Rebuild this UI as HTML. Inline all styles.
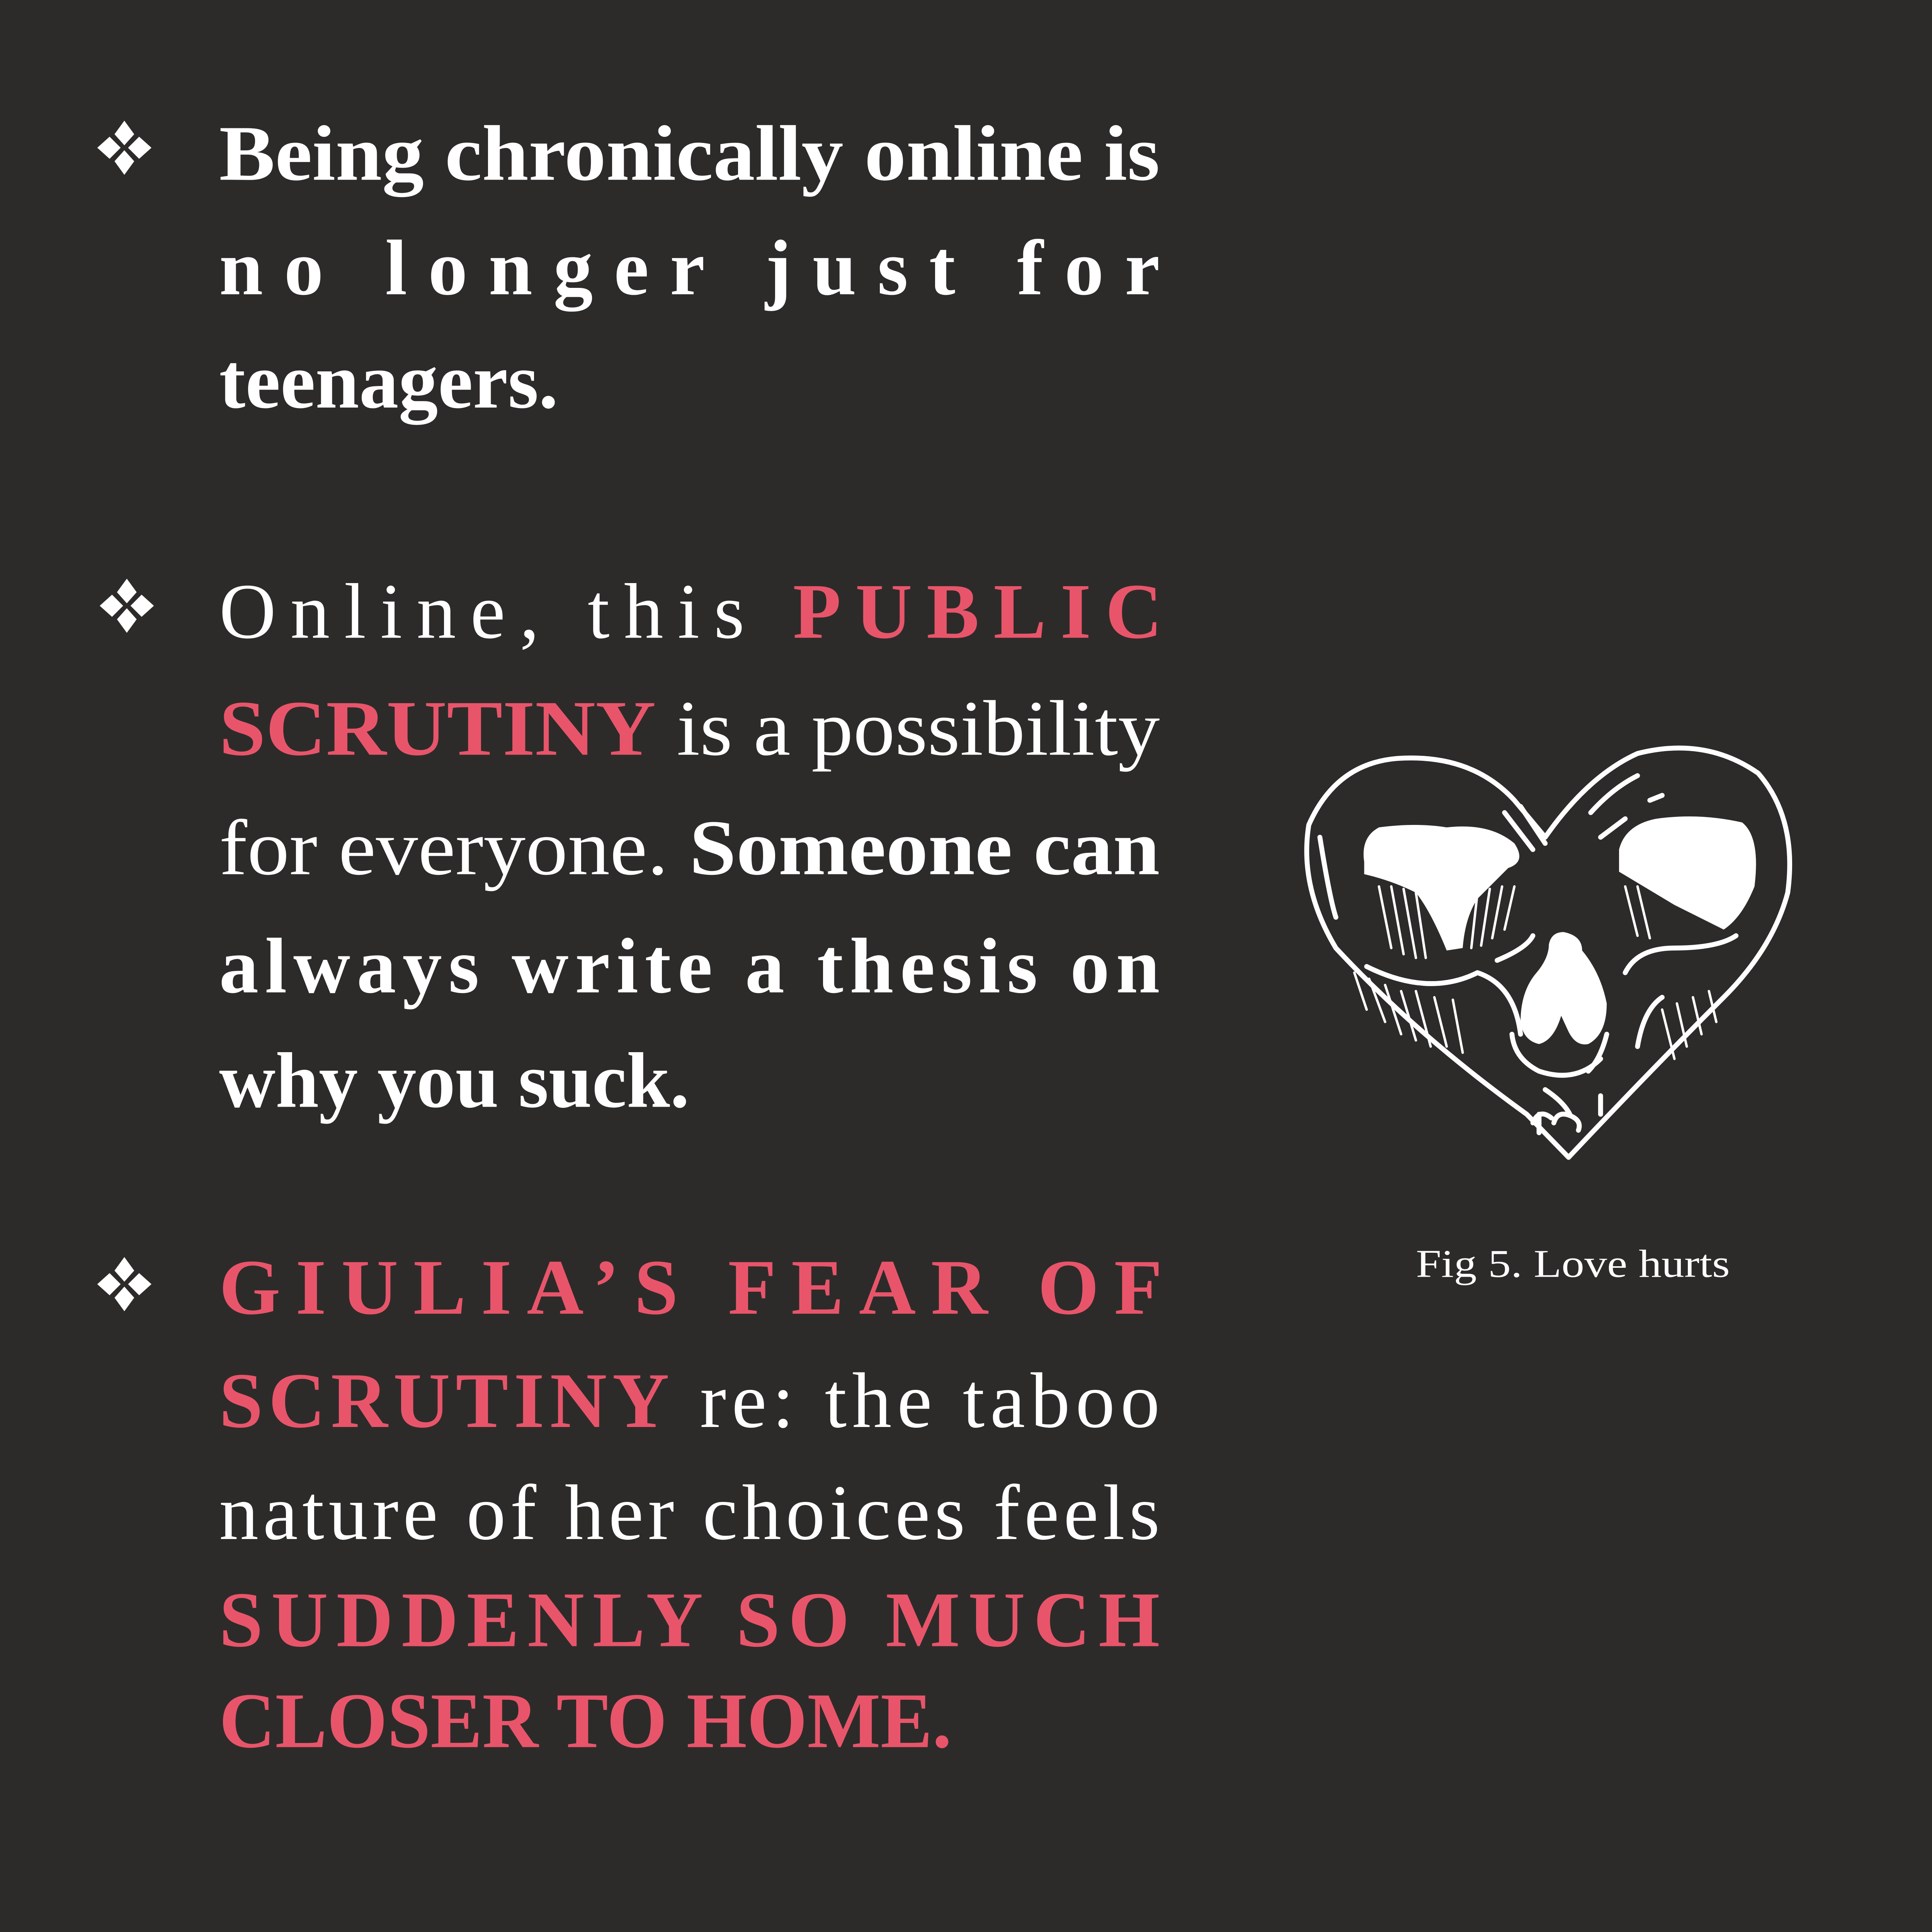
<!DOCTYPE html>
<html><head><meta charset="utf-8"><style>
html,body{margin:0;padding:0;background:#2d2b2a;width:5334px;height:5334px;overflow:hidden;}
svg{display:block;position:absolute;left:0;top:0;}
</style></head><body>
<svg width="5334" height="5334" viewBox="0 0 1674 1674" xmlns="http://www.w3.org/2000/svg" overflow="hidden">
<rect width="1674" height="1674" fill="#2d2b2a"/>
<defs>
<g id="bul" fill="#fff">
<polygon points="0,-22 8,-11 0,-2 -8,-11"/>
<polygon points="0,22 8,11 0,2 -8,11"/>
<polygon points="-22,0 -12,-9 -3,0 -12,9"/>
<polygon points="22,0 12,-9 3,0 12,9"/>
</g>
</defs>
<use href="#bul" x="101" y="120"/>
<use href="#bul" x="103" y="492"/>
<use href="#bul" x="101" y="1043"/>
<g font-family="Liberation Serif, serif" fill="#fff" font-size="64">
<text x="178" y="146" font-weight="bold" textLength="764" lengthAdjust="spacingAndGlyphs">Being chronically online is</text>
<text x="178" y="239" font-weight="bold" textLength="764" lengthAdjust="spacing">no longer just for</text>
<text x="178" y="331" font-weight="bold">teenagers.</text>

<text x="178" y="518" textLength="766" lengthAdjust="spacing">Online, this <tspan font-weight="bold" fill="#e8556a">PUBLIC</tspan></text>
<text x="178" y="613" textLength="764" lengthAdjust="spacingAndGlyphs"><tspan font-weight="bold" fill="#e8556a">SCRUTINY</tspan> is a possibility</text>
<text x="178" y="710" textLength="764" lengthAdjust="spacingAndGlyphs">for everyone. <tspan font-weight="bold">Someone can</tspan></text>
<text x="178" y="806" font-weight="bold" textLength="764" lengthAdjust="spacing">always write a thesis on</text>
<text x="178" y="899" font-weight="bold" textLength="382" lengthAdjust="spacingAndGlyphs">why you suck.</text>

<text x="178" y="1067" font-weight="bold" fill="#e8556a" textLength="766" lengthAdjust="spacing">GIULIA’S FEAR OF</text>
<text x="178" y="1159" textLength="764" lengthAdjust="spacing"><tspan font-weight="bold" fill="#e8556a">SCRUTINY</tspan> re: the taboo</text>
<text x="178" y="1250" textLength="764" lengthAdjust="spacing">nature of her choices feels</text>
<text x="178" y="1337" font-weight="bold" fill="#e8556a" textLength="764" lengthAdjust="spacing">SUDDENLY SO MUCH</text>
<text x="178" y="1419" font-weight="bold" fill="#e8556a" textLength="595" lengthAdjust="spacingAndGlyphs">CLOSER TO HOME.</text>

<text x="1150" y="1037" font-size="32" textLength="255" lengthAdjust="spacingAndGlyphs">Fig 5. Love hurts</text>
</g>
<g fill="none" stroke="#fff" stroke-width="4" stroke-linecap="round" stroke-linejoin="round">
<path d="M1274,940 L1240,905 Q1150,840 1085,770 Q1055,720 1063,670 Q1085,620 1135,616 Q1195,612 1230,650 L1255,680 Q1290,630 1330,612 Q1385,598 1428,628 Q1460,665 1452,725 Q1440,770 1400,810 Q1340,870 1274,940 Z"/>
<path d="M1072,680 Q1080,730 1085,745"/>
<path d="M1110,785 Q1160,810 1200,790 Q1230,800 1235,840 M1216,780 Q1240,770 1245,760"/>
<path d="M1320,790 Q1330,770 1360,770 Q1395,770 1410,760 M1330,850 Q1335,820 1350,810"/>
<path d="M1228,840 Q1230,860 1250,870 Q1280,880 1300,860 M1290,870 Q1300,860 1305,840"/>
<path d="M1255,885 Q1270,895 1275,905 M1250,905 L1250,920 M1300,890 L1300,905"/>
<path d="M1262,912 Q1265,902 1275,906 Q1285,910 1282,918 M1245,912 Q1250,900 1260,908"/>
<path d="M1222,660 L1245,690 M1235,655 L1255,685 M1292,660 Q1310,640 1330,630 M1300,680 L1320,665 M1340,650 L1350,646"/>
<g stroke-width="2">
<path d="M1120,720 L1130,770 M1130,720 L1140,775 M1140,722 L1150,778 M1150,725 L1158,778 M1200,725 L1195,770 M1210,722 L1203,768 M1220,720 L1212,762 M1230,720 L1222,755"/>
<path d="M1100,790 L1110,820 M1112,795 L1125,830 M1125,800 L1138,840 M1138,805 L1150,845 M1150,805 L1162,850 M1165,810 L1175,850 M1180,812 L1188,855"/>
<path d="M1320,720 L1330,760 M1330,720 L1340,762 M1380,690 L1390,730 M1390,688 L1398,725 M1400,685 L1408,720"/>
<path d="M1350,820 L1360,860 M1362,815 L1370,850 M1375,810 L1382,840 M1388,805 L1394,830"/>
</g>
</g>
<g fill="#fff">
<path d="M1108,700 Q1105,680 1120,672 Q1150,668 1175,672 Q1210,668 1230,685 Q1240,700 1225,705 Q1210,720 1200,730 Q1190,745 1188,770 L1175,772 Q1162,740 1150,725 Q1130,715 1108,710 Z"/>
<path d="M1315,690 Q1320,670 1345,665 Q1380,660 1415,668 Q1430,680 1425,720 Q1415,745 1400,755 Q1380,745 1360,735 Q1335,720 1315,708 Z"/>
<path d="M1270,757 Q1285,760 1285,772 Q1300,790 1305,815 Q1305,840 1290,848 Q1280,850 1274,838 L1268,825 Q1262,845 1250,848 Q1237,845 1235,830 Q1235,805 1248,790 Q1258,778 1258,767 Q1260,757 1270,757 Z"/>
</g>
</svg>
</body></html>
